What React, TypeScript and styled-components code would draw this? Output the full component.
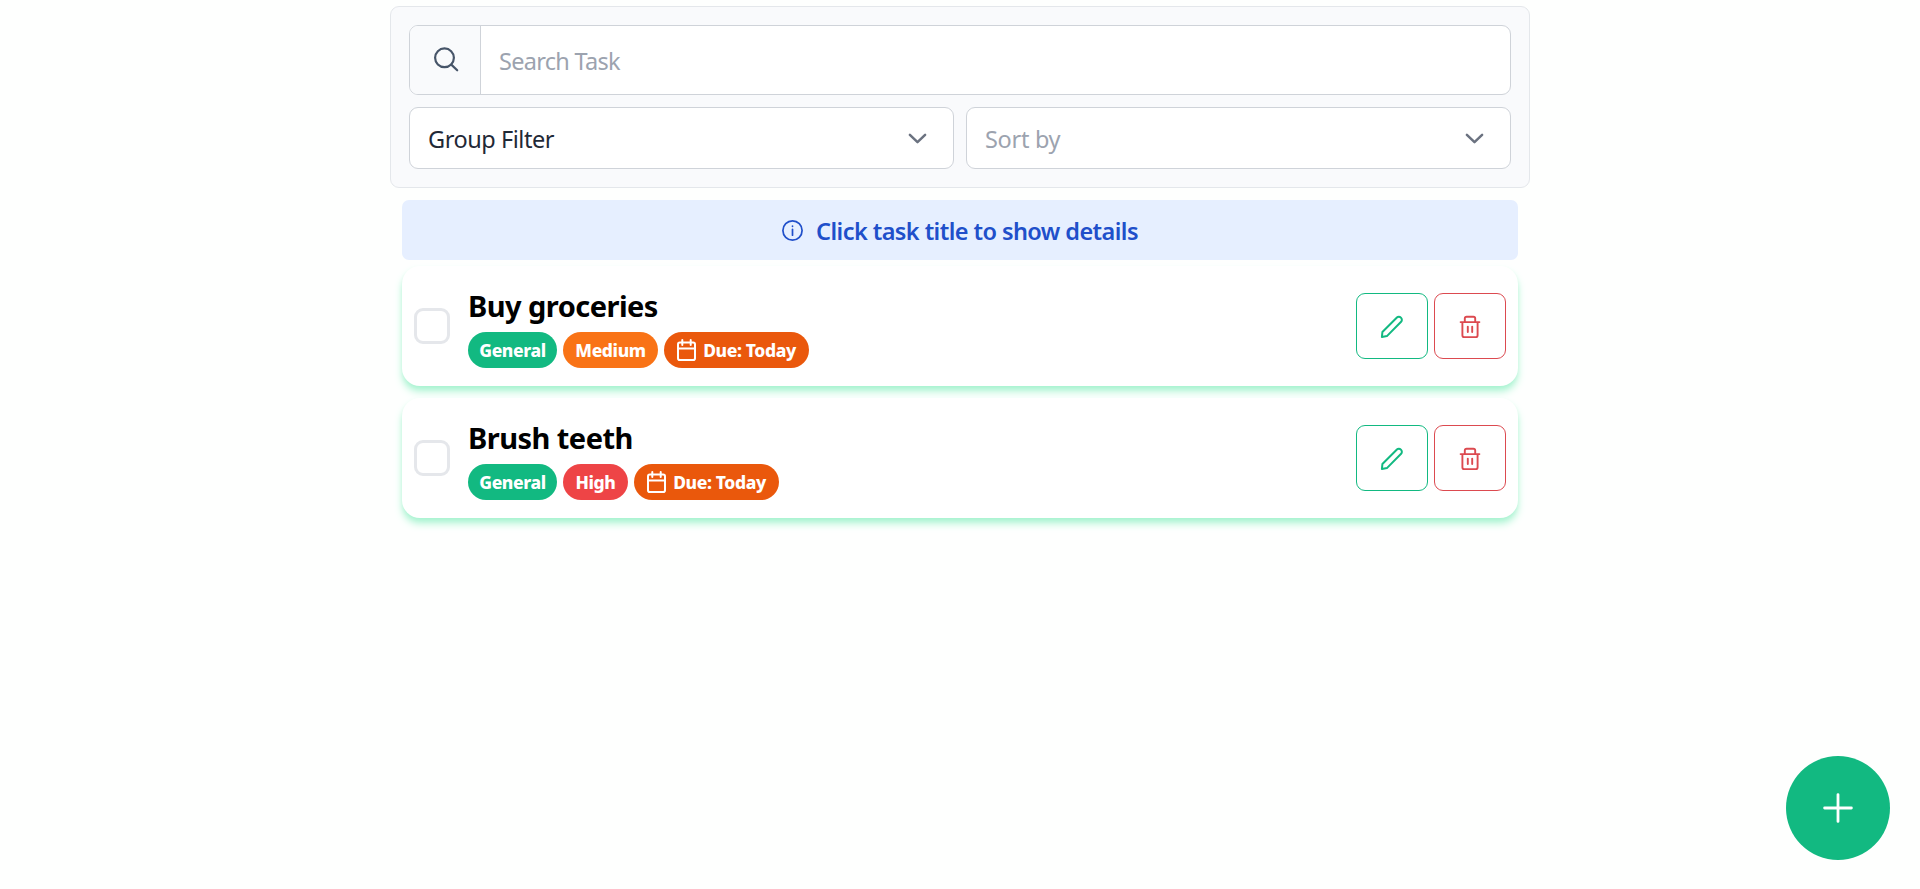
import React from "react";
import styled, { createGlobalStyle } from "styled-components";

const GlobalStyle = createGlobalStyle`
  *, *::before, *::after { box-sizing: border-box; }
  body {
    margin: 0;
    background: #fefffe;
    font-family: "Segoe UI", "Noto Sans", "Open Sans", sans-serif;
    font-size: 24px;
  }
  button, input { font: inherit; }
`;

const Page = styled.main`
  width: 1140px;
  min-height: 100vh;
  margin: 0 auto;
  padding-top: 6px;
`;

const FilterPanel = styled.section`
  display: flex;
  flex-direction: column;
  gap: 12px;
  height: 182px;
  padding: 18px;
  border: 1px solid #e4e7eb;
  border-radius: 9px;
  background: #f9fafc;
`;

const SearchGroup = styled.label`
  display: flex;
  height: 70px;
  border: 1px solid #cfd3d9;
  border-radius: 9px;
  background: #fff;
  overflow: hidden;
`;

const SearchAddon = styled.span`
  display: flex;
  flex: none;
  justify-content: center;
  width: 71px;
  padding: 20px 0 0 1px;
  border-right: 1px solid #cfd3d9;
  background: #f9fafc;
  color: #475569;
`;

const SearchInput = styled.input`
  flex: 1;
  min-width: 0;
  padding: 2px 18px 0;
  border: 0;
  outline: 0;
  background: transparent;
  font-size: 23.5px;
  letter-spacing: -0.72px;
  &::placeholder { color: #9ca3af; opacity: 1; }
`;

const SelectRow = styled.div`
  display: grid;
  grid-template-columns: 1fr 1fr;
  gap: 12px;
`;

const Select = styled.div<{ $placeholder?: boolean }>`
  display: flex;
  align-items: center;
  justify-content: space-between;
  height: 62px;
  padding: 0 25px 0 18px;
  border: 1px solid #cfd3d9;
  border-radius: 9px;
  background: #fff;
  color: ${(p) => (p.$placeholder ? "#9ca3af" : "#1f2937")};
  font-size: 23.5px;
  letter-spacing: ${(p) => (p.$placeholder ? "-0.3px" : "-0.45px")};
  svg { color: #6b7280; }
`;

const SelectLabel = styled.span`
  padding-top: 1px;
`;

const Banner = styled.div`
  display: flex;
  align-items: center;
  justify-content: center;
  gap: 13px;
  height: 60px;
  margin: 12px 12px 6px;
  border-radius: 7px;
  background: #e6efff;
  color: #204fca;
  font-size: 23.5px;
  font-weight: 600;
`;

const BannerText = styled.span`
  padding-top: 2px;
  letter-spacing: -0.57px;
`;

const TaskList = styled.ul`
  display: flex;
  flex-direction: column;
  gap: 12px;
  margin: 0 12px;
  padding: 0;
  list-style: none;
`;

const TaskCard = styled.li`
  display: flex;
  align-items: center;
  height: 120px;
  padding: 0 12px;
  border-radius: 18px;
  background: #fff;
  box-shadow: 0 6px 9px -1.5px #a7f3d0, 0 3px 6px -3px #a7f3d0;
`;

const Checkbox = styled.button`
  flex: none;
  width: 36px;
  height: 36px;
  border: 3px solid #e5e7eb;
  border-radius: 9px;
  background: #fff;
`;

const TaskBody = styled.div`
  flex: 1;
  margin-left: 18px;
  padding-top: 2px;
`;

const TaskTitle = styled.h2`
  margin: 0 0 6px;
  font-size: 29px;
  font-weight: 700;
  line-height: 40px;
  letter-spacing: -0.54px;
  color: #000;
`;

const Tags = styled.div`
  display: flex;
  gap: 6px;
`;

const Tag = styled.span<{ $color: string; $width: number }>`
  display: flex;
  align-items: center;
  justify-content: center;
  gap: 7px;
  width: ${(p) => p.$width}px;
  height: 36px;
  border-radius: 18px;
  background: ${(p) => p.$color};
  color: #fff;
  font-size: 17.5px;
  font-weight: 800;
  letter-spacing: -0.4px;
  white-space: nowrap;
`;

const Actions = styled.div`
  display: flex;
  gap: 6px;
`;

const ActionButton = styled.button<{ $color: string }>`
  display: flex;
  align-items: center;
  justify-content: center;
  width: 72px;
  height: 66px;
  padding: 2px 0 0;
  border: 1px solid ${(p) => p.$color};
  border-radius: 9px;
  background: transparent;
  color: ${(p) => p.$color};
`;

const AddButton = styled.button`
  position: fixed;
  right: 30px;
  bottom: 29px;
  display: flex;
  align-items: center;
  justify-content: center;
  width: 104px;
  height: 104px;
  padding: 0;
  border: 0;
  border-radius: 50%;
  background: #12b981;
  color: #fff;
`;

const Icon = styled.svg`
  display: block;
  flex: none;
  fill: none;
  stroke: currentColor;
  stroke-linecap: round;
  stroke-linejoin: round;
`;

const SearchIcon = () => (
  <Icon width="26" height="26" viewBox="0 0 26 26" strokeWidth="2.2">
    <circle cx="11.5" cy="11.8" r="9.4" />
    <path d="M18.3 18.6 24.2 24.3" />
  </Icon>
);

const ChevronIcon = () => (
  <Icon width="21" height="21" viewBox="0 0 21 21" strokeWidth="2.5">
    <path d="M2.9 6.9 10.5 14.2 18.1 6.9" />
  </Icon>
);

const InfoIcon = () => (
  <Icon width="21" height="21" viewBox="0 0 21 21" strokeWidth="1.7">
    <circle cx="10.5" cy="10.5" r="9.6" />
    <path d="M10.5 9.4V15.2" />
    <path d="M10.5 6.1V6.3" />
  </Icon>
);

const CalendarIcon = () => (
  <Icon width="19" height="22" viewBox="0 0 19 22" strokeWidth="2">
    <rect x="1" y="3.6" width="17" height="17.4" rx="1.8" />
    <path d="M1 9.6H18M5.3 1V6M13.7 1V6" />
  </Icon>
);

const PencilIcon = () => (
  <Icon width="24" height="24" viewBox="0 0 24 24" strokeWidth="2">
    <path d="M1.9 22.1 2.4 17 16.9 2.5C18 1.4 19.7 1.4 20.9 2.6 22.1 3.8 22.2 5.6 21.1 6.7L6.9 21.1Z" />
  </Icon>
);

const TrashIcon = () => (
  <Icon width="22" height="24" viewBox="0 0 22 24" strokeWidth="1.9">
    <path d="M1.6 7.1H20.4M5.8 6.9V3.6Q5.8 1.8 7.6 1.8H14.4Q16.2 1.8 16.2 3.6V6.9M3.4 7.3V20.2Q3.4 22.1 5.3 22.1H16.7Q18.6 22.1 18.6 20.2V7.3M8.8 11.6V17M13.2 11.6V17" />
  </Icon>
);

const PlusIcon = () => (
  <Icon width="30" height="30" viewBox="0 0 30 30" strokeWidth="2.8">
    <path d="M15 1.6V28.4M1.6 15H28.4" />
  </Icon>
);

const GREEN = "#12b981";
const RED = "#dc4a50";

interface Task {
  title: string;
  priority: string;
  color: string;
  width: number;
}

const tasks: Task[] = [
  { title: "Buy groceries", priority: "Medium", color: "#f97316", width: 95 },
  { title: "Brush teeth", priority: "High", color: "#ee4446", width: 65 },
];

export default function App() {
  return (
    <>
      <GlobalStyle />
      <Page>
        <FilterPanel>
          <SearchGroup>
            <SearchAddon>
              <SearchIcon />
            </SearchAddon>
            <SearchInput placeholder="Search Task" />
          </SearchGroup>
          <SelectRow>
            <Select>
              <SelectLabel>Group Filter</SelectLabel>
              <ChevronIcon />
            </Select>
            <Select $placeholder>
              <SelectLabel>Sort by</SelectLabel>
              <ChevronIcon />
            </Select>
          </SelectRow>
        </FilterPanel>
        <Banner>
          <InfoIcon />
          <BannerText>Click task title to show details</BannerText>
        </Banner>
        <TaskList>
          {tasks.map((task) => (
            <TaskCard key={task.title}>
              <Checkbox aria-label={task.title} />
              <TaskBody>
                <TaskTitle>{task.title}</TaskTitle>
                <Tags>
                  <Tag $color={GREEN} $width={89}>General</Tag>
                  <Tag $color={task.color} $width={task.width}>{task.priority}</Tag>
                  <Tag $color="#ea580c" $width={145}>
                    <CalendarIcon />
                    Due: Today
                  </Tag>
                </Tags>
              </TaskBody>
              <Actions>
                <ActionButton $color={GREEN} aria-label="Edit">
                  <PencilIcon />
                </ActionButton>
                <ActionButton $color={RED} aria-label="Delete">
                  <TrashIcon />
                </ActionButton>
              </Actions>
            </TaskCard>
          ))}
        </TaskList>
      </Page>
      <AddButton aria-label="Add task">
        <PlusIcon />
      </AddButton>
    </>
  );
}
